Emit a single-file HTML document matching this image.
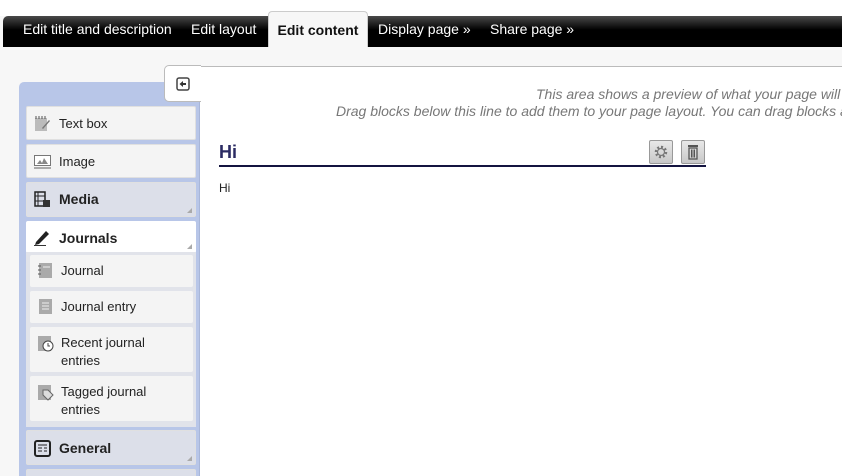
<!DOCTYPE html>
<html><head><style>
*{margin:0;padding:0;box-sizing:border-box}
html,body{width:842px;height:476px;overflow:hidden}
body{background:#f7f7f7;font-family:"Liberation Sans",Arial,sans-serif;position:relative;font-size:13px;color:#222}
.abs{position:absolute}
#top{left:0;top:0;width:842px;height:16px;background:#fff}
#nav{left:3px;top:16px;width:839px;height:31px;background:linear-gradient(#4a4a4a,#000 45%,#000);border-radius:5px 0 0 0}
.tab{position:absolute;top:5px;color:#fff;font-size:14px;white-space:nowrap}
#act{left:268px;top:11px;width:100px;height:36px;background:#f7f7f7;border:1px solid #ccc;border-bottom:none;border-radius:4px 4px 0 0;font-size:14px;font-weight:bold;color:#111;text-align:center;padding-top:10px;white-space:nowrap}
#side{left:19px;top:82px;width:181px;height:400px;background:#b8c6e8;border-radius:5px 0 0 0;border-right:1px solid #a8b6d8}
#main{left:200px;top:66px;width:642px;height:410px;background:#fff;border-top:1px solid #bbb}
#tog{left:164px;top:65px;width:37px;height:37px;background:#fff;border:1px solid #bbb;border-right:none;border-radius:5px 0 0 5px}
.it{position:absolute;left:26px;width:170px;background:#f4f4f4;border:1px solid #e0e0e0;border-radius:2px;font-size:13px;padding-left:32px}
.cat{background:#dcdfe9;font-weight:bold;font-size:14px}
.sub{position:absolute;left:30px;width:163px;background:#f4f4f4;border-radius:2px;font-size:13px;padding-left:31px;line-height:18px}
.ic{position:absolute;left:7px;width:17px;height:17px}
.grip{position:absolute;right:3px;bottom:3px;width:0;height:0;border-left:5px solid transparent;border-bottom:5px solid #aaa}
.hint{font-style:italic;color:#777;font-size:14px;white-space:nowrap}
</style></head><body>
<div id="top" class="abs"></div>
<div id="nav" class="abs">
<span class="tab" style="left:20px">Edit title and description</span>
<span class="tab" style="left:188px">Edit layout</span>
<span class="tab" style="left:375px">Display page »</span>
<span class="tab" style="left:487px">Share page »</span>
</div>
<div id="act" class="abs">Edit content</div>
<div id="side" class="abs"></div>
<div id="main" class="abs"></div>
<div id="tog" class="abs"><svg class="abs" style="left:11px;top:11px" width="14" height="14"><rect x="1" y="1" width="12" height="12" rx="2" fill="none" stroke="#444" stroke-width="1.5"/><path d="M3.5 7 L7 4 V6 H10 V8 H7 V10 Z" fill="#333"/></svg></div>

<div class="abs hint" style="left:536px;top:86px">This area shows a preview of what your page will</div>
<div class="abs hint" style="left:336px;top:103px">Drag blocks below this line to add them to your page layout. You can drag blocks a</div>

<div class="abs" style="left:219px;top:142px;font-size:18px;font-weight:bold;color:#2b2b63">Hi</div>
<div class="abs" style="left:219px;top:165px;width:487px;height:2px;background:#141440"></div>
<div class="abs" style="left:649px;top:140px;width:24px;height:24px;background:linear-gradient(#e8e8e8,#c8c8c8);border:1px solid #999;border-radius:2px"><svg width="22" height="22"><circle cx="11" cy="11" r="5" fill="none" stroke="#777" stroke-width="2.5" stroke-dasharray="2 1.9"/><circle cx="11" cy="11" r="3.5" fill="none" stroke="#777" stroke-width="1.2"/></svg></div>
<div class="abs" style="left:681px;top:140px;width:24px;height:24px;background:linear-gradient(#e8e8e8,#c8c8c8);border:1px solid #999;border-radius:2px"><svg width="22" height="22"><rect x="6" y="4" width="10" height="2" fill="#555"/><rect x="7" y="7" width="8" height="11" fill="none" stroke="#555" stroke-width="1.3"/><path d="M9.5 8.5v8M11 8.5v8M12.5 8.5v8" stroke="#555"/></svg></div>
<div class="abs" style="left:219px;top:181px;font-size:12px">Hi</div>

<div class="it" style="top:106px;height:34px;line-height:33px"><svg class="ic" style="top:8px" viewBox="0 0 17 17"><rect x="1" y="3" width="12" height="13" fill="#bbb"/><path d="M2 1v3M5 1v3M8 1v3M11 1v3" stroke="#555"/><path d="M8 13 L15 5 L16 6 L9 14 Z" fill="#777"/></svg>Text box</div>
<div class="it" style="top:144px;height:34px;line-height:33px"><svg class="ic" style="top:8px" viewBox="0 0 17 17"><rect x="0.5" y="2.5" width="16" height="10" fill="#fff" stroke="#777"/><path d="M3 11 L6 7 L8 10 L10 5 L14 11Z" fill="#888"/><rect x="0" y="14" width="17" height="2" fill="#aaa"/></svg>Image</div>
<div class="it cat" style="top:182px;height:35px;line-height:33px"><svg class="ic" style="top:8px" viewBox="0 0 17 17"><rect x="1" y="1" width="10" height="14" fill="none" stroke="#222" stroke-width="1.5"/><path d="M4 1v14M1 5h10M1 10h10" stroke="#222"/><rect x="9" y="9" width="7" height="7" fill="#333"/></svg>Media<span class="grip"></span></div>
<div class="it cat" style="top:221px;height:32px;line-height:32px;background:#fff;border-color:#fff"><svg class="ic" style="top:7px" viewBox="0 0 17 17"><path d="M2 13 L12 2 L15 5 L5 15 L1 16Z" fill="#222"/><path d="M0 16.5h12" stroke="#333"/></svg>Journals<span class="grip"></span></div>
<div class="abs" style="left:26px;top:252px;width:170px;height:175px;background:#e1e3ea"></div>
<div class="sub" style="top:255px;height:32px;line-height:32px"><svg class="ic" style="top:7px" viewBox="0 0 17 17"><rect x="2" y="1" width="13" height="15" fill="#aaa"/><path d="M1 4h3M1 8h3M1 12h3" stroke="#555"/><path d="M6 5h7" stroke="#eee"/></svg>Journal</div>
<div class="sub" style="top:291px;height:32px;line-height:32px"><svg class="ic" style="top:7px" viewBox="0 0 17 17"><rect x="2" y="1" width="13" height="15" fill="#aaa"/><path d="M5 5h7M5 8h7M5 11h7" stroke="#eee"/></svg>Journal entry</div>
<div class="sub" style="top:327px;height:45px;padding-top:7px"><svg class="ic" style="top:8px" viewBox="0 0 17 17"><rect x="1" y="1" width="13" height="15" fill="#aaa"/><circle cx="11" cy="11" r="5" fill="#fff" stroke="#444"/><path d="M11 8v3h2" stroke="#444" fill="none"/></svg>Recent journal<br>entries</div>
<div class="sub" style="top:376px;height:45px;padding-top:7px"><svg class="ic" style="top:8px" viewBox="0 0 17 17"><rect x="1" y="1" width="13" height="15" fill="#aaa"/><path d="M6 6 L11 6 L16 11 L11 16 L6 11Z" fill="#ddd" stroke="#666"/></svg>Tagged journal<br>entries</div>
<div class="it cat" style="top:430px;height:35px;line-height:35px"><svg class="ic" style="top:9px" viewBox="0 0 17 17"><rect x="1" y="1" width="15" height="15" rx="2" fill="none" stroke="#222" stroke-width="2"/><path d="M4 5h9M4 8h4M4 11h4M10 8h3M10 11h3" stroke="#222"/></svg>General<span class="grip"></span></div>
<div class="it cat" style="top:469px;height:20px"></div>
</body></html>
